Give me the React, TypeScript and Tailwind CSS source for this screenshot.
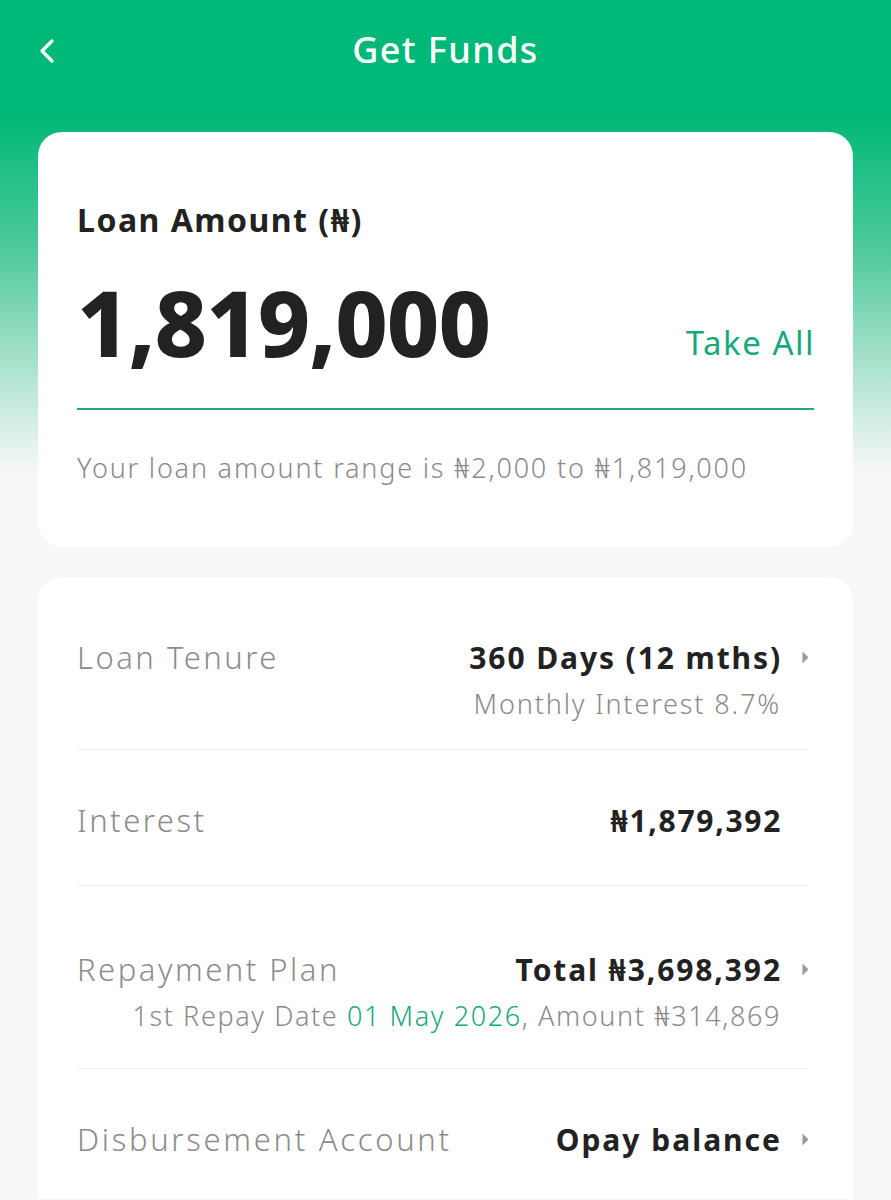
import React from "react";

function Arrow() {
  return (
    <span className="flex w-[27px] justify-end">
      <svg width="7" height="13" viewBox="0 0 7 13">
        <path d="M0.5 0.5 L6.5 6.5 L0.5 12.5 Z" fill="#9a9a9a" />
      </svg>
    </span>
  );
}

export default function App() {
  const font = { fontFamily: '"Noto Sans", "DejaVu Sans", sans-serif' };
  return (
    <div
      className="min-h-[1200px] w-[891px] bg-[linear-gradient(to_bottom,#00b877_0px,#00b877_115px,#4fca9a_250px,#b5e6d3_380px,#f6f7f9_470px,#f6f7f9_100%)]"
      style={font}
    >
      {/* Header */}
      <div className="relative flex h-[100px] items-center justify-center">
        <svg className="absolute left-[36px] top-[38px]" width="22" height="26" viewBox="0 0 22 26">
          <path d="M16 3 L6 13 L16 23" fill="none" stroke="#ffffff" strokeWidth="3.2" strokeLinecap="round" strokeLinejoin="round" />
        </svg>
        <div className="text-[36px] font-medium tracking-[1.4px] text-white">Get Funds</div>
      </div>

      {/* Card 1 */}
      <div className="mx-[38px] mt-[32px] h-[415px] rounded-[24px] bg-white px-[39px] pt-[68px]">
        <div className="text-[32px] font-bold leading-[40px] tracking-[1.5px] text-[#222222]">Loan Amount (₦)</div>
        <div className="mt-[32px] flex items-end justify-between">
          <div className="text-[91px] font-extrabold leading-[100px] tracking-[-1px] text-[#222222]">1,819,000</div>
          <div className="mb-[9px] mr-[-1px] text-[33px] leading-[40px] tracking-[1.5px] text-[#16a87b]">Take All</div>
        </div>
        <div className="mt-[36px] h-[2px] w-full bg-[#25a67d]" />
        <div className="mt-[40px] text-[27px] font-light leading-[36px] tracking-[1.8px] text-[#8a8a8a]">
          Your loan amount range is ₦2,000 to ₦1,819,000
        </div>
      </div>

      {/* Card 2 */}
      <div className="mx-[38px] mt-[30px] rounded-t-[24px] bg-white pl-[39px] pr-[44px] pb-[40px]">
        {/* Row 1 */}
        <div className="border-b border-[#f0f0f0] pt-[60px] pb-[27px]">
          <div className="flex h-[40px] items-center justify-between">
            <div className="text-[31px] font-light tracking-[2.5px] text-[#8c8c8c]">Loan Tenure</div>
            <div className="flex items-center">
              <div className="text-[30px] font-bold tracking-[1.9px] text-[#222222]">360 Days (12 mths)</div>
              <Arrow />
            </div>
          </div>
          <div className="mt-[9px] flex h-[36px] items-center justify-end pr-[28px] text-[27px] font-light tracking-[1.85px] text-[#8a8a8a]">
            Monthly Interest 8.7%
          </div>
        </div>
        {/* Row 2 */}
        <div className="border-b border-[#f0f0f0] pt-[50px] pb-[45px]">
          <div className="flex h-[40px] items-center justify-between">
            <div className="text-[31px] font-light tracking-[2.5px] text-[#8c8c8c]">Interest</div>
            <div className="flex items-center pr-[27px]">
              <div className="text-[30px] font-bold tracking-[1.7px] text-[#222222]">₦1,879,392</div>
            </div>
          </div>
        </div>
        {/* Row 3 */}
        <div className="border-b border-[#f0f0f0] pt-[63px] pb-[34px]">
          <div className="flex h-[40px] items-center justify-between">
            <div className="text-[31px] font-light tracking-[2.5px] text-[#8c8c8c]">Repayment Plan</div>
            <div className="flex items-center">
              <div className="text-[30px] font-bold tracking-[1.9px] text-[#222222]">Total ₦3,698,392</div>
              <Arrow />
            </div>
          </div>
          <div className="mt-[9px] flex h-[36px] items-center justify-end whitespace-pre pr-[28px] text-[27px] font-light tracking-[1.6px] text-[#8a8a8a]">
            <span>1st Repay Date </span>
            <span className="text-[#16a87b]">01 May 2026</span>
            <span>, Amount ₦314,869</span>
          </div>
        </div>
        {/* Row 4 */}
        <div className="pt-[50px]">
          <div className="flex h-[40px] items-center justify-between">
            <div className="text-[31px] font-light tracking-[2.7px] text-[#8c8c8c]">Disbursement Account</div>
            <div className="flex items-center">
              <div className="text-[30px] font-bold tracking-[2px] text-[#222222]">Opay balance</div>
              <Arrow />
            </div>
          </div>
        </div>
      </div>
    </div>
  );
}
